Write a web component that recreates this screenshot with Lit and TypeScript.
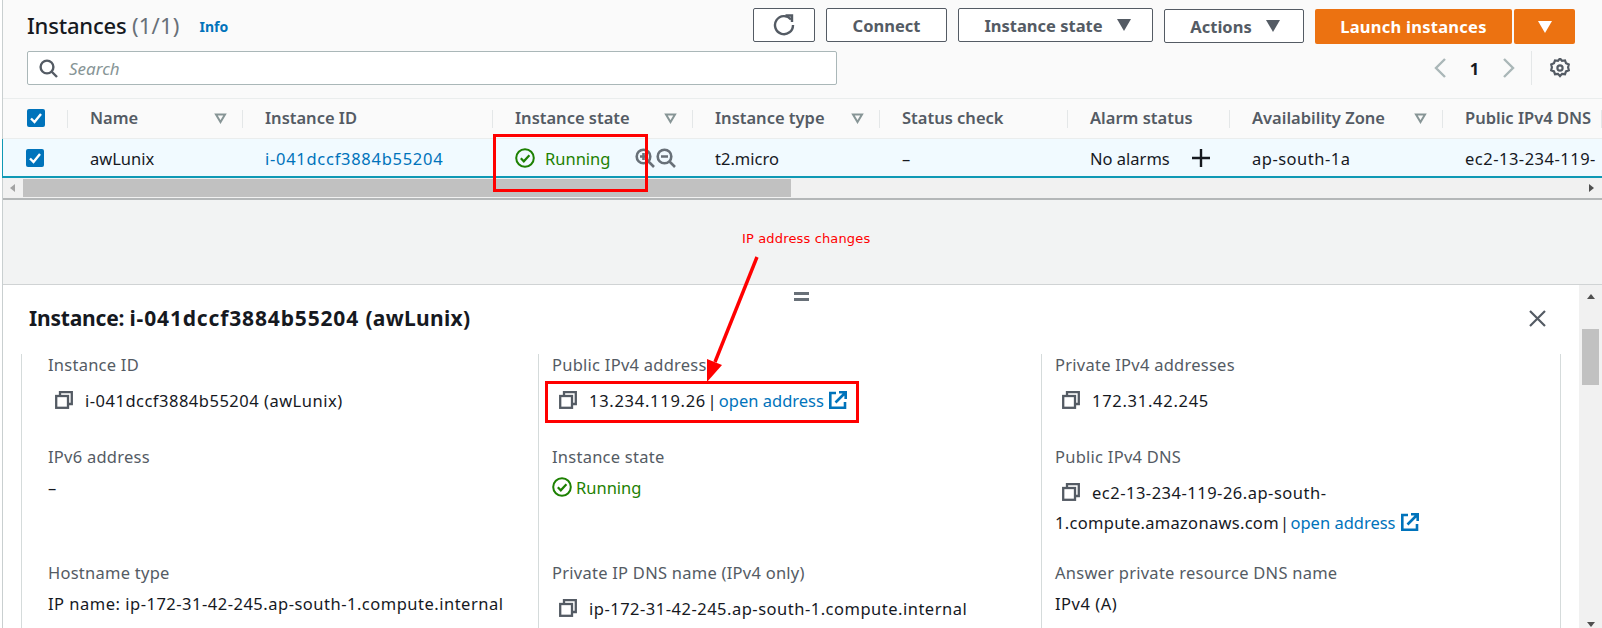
import { css, html, LitElement, svg } from "lit";
import { customElement } from "lit/decorators.js";

const columns = [
	{ label: "", filter: false },
	{ label: "Name", filter: true },
	{ label: "Instance ID", filter: false },
	{ label: "Instance state", filter: true },
	{ label: "Instance type", filter: true },
	{ label: "Status check", filter: false },
	{ label: "Alarm status", filter: false },
	{ label: "Availability Zone", filter: true },
	{ label: "Public IPv4 DNS", filter: false },
];

const checkbox = html`<svg class="check" viewBox="0 0 18 18">
	<rect width="18" height="18" rx="2" fill="#0073bb" />
	<path d="M4 9.5l3.5 3.5L14 5" fill="none" stroke="#fff" stroke-width="2.4" />
</svg>`;

const copyIcon = html`<svg class="copy" viewBox="0 0 18 18" fill="none" stroke="#545b64" stroke-width="2.3">
	<rect x="1.2" y="5" width="11.8" height="11.8" />
	<path d="M5 5V1.2h11.8V13H13" />
</svg>`;

const externalIcon = html`<svg class="ext" viewBox="0 0 18 18" fill="none" stroke="#0073bb" stroke-width="2.6">
	<path d="M7 2H1.3v14.7H16V11" />
	<path d="M6.5 11.5L16 2M10 1.3h6.7V8" />
</svg>`;

const runningIcon = (size: number) => html`<svg width=${size} height=${size} viewBox="0 0 20 20" fill="none" stroke="#1d8102" stroke-width="2">
	<circle cx="10" cy="10" r="8.8" />
	<path d="M5.8 10.3l3 3 5.6-6" stroke-width="2.2" />
</svg>`;

const caret = svg`<path d="M0 0h14L7 12z" />`;

const magnifier = (minusOnly: boolean) => html`<svg class="mag" viewBox="0 0 20 20" fill="none" stroke="#687078" stroke-width="2.6">
	<circle cx="8.5" cy="8.5" r="6.8" />
	<path d="M13.5 13.5L19 19M5 8.5h7" />
	${minusOnly ? "" : svg`<path d="M8.5 5v7" />`}
</svg>`;

@customElement("app-root")
export class AppRoot extends LitElement {
	static override styles = css`
		:host {
			display: block;
			position: relative;
			width: 1602px;
			height: 628px;
			overflow: hidden;
			background: #fff;
			font-family: "Noto Sans", "Liberation Sans", sans-serif;
			color: #16191f;
		}

		.page {
			display: flex;
			flex-direction: column;
			height: 628px;
			margin-left: 2px;
			border-left: 1px solid #c9cfd0;
			background: #f2f3f3;
		}

		.top {
			background: #fafafa;
			padding: 8px 27px 0 24px;
			height: 98px;
			box-sizing: border-box;
		}

		.bar {
			display: flex;
			align-items: flex-start;
			height: 43px;
		}

		.title {
			font-size: 22px;
			font-weight: 500;
			line-height: 34px;
			letter-spacing: -0.2px;
		}

		.title span {
			color: #687078;
			font-weight: 400;
			letter-spacing: 0.2px;
		}

		.info {
			margin-left: 20px;
			font-size: 14px;
			font-weight: 700;
			line-height: 38px;
			color: #0073bb;
		}

		.actions {
			margin-left: auto;
			display: flex;
			gap: 11px;
		}

		.btn {
			box-sizing: border-box;
			height: 34px;
			display: flex;
			align-items: center;
			justify-content: center;
			gap: 14px;
			border: 1px solid #545b64;
			border-radius: 2px;
			background: #fff;
			color: #545b64;
			font-size: 16.5px;
			font-weight: 700;
		}

		.btn svg.caret {
			width: 14px;
			height: 12px;
			fill: #545b64;
		}

		.w-refresh { width: 62px; }
		.w-connect { width: 121px; }
		.w-state { width: 195px; padding-left: 4px; }
		.w-actions { width: 140px; margin-top: 1px; padding-left: 2px; }

		.launch-group {
			display: flex;
			gap: 2px;
			margin-top: 1px;
		}

		.primary {
			border: none;
			height: 35px;
			background: #ec7211;
			color: #fff;
		}

		.w-launch { width: 197px; letter-spacing: 0.25px; }
		.w-drop { width: 61px; }
		.primary svg.caret { fill: #fff; }

		.tools {
			display: flex;
			align-items: center;
			height: 34px;
		}

		.search {
			box-sizing: border-box;
			width: 810px;
			height: 34px;
			display: flex;
			align-items: center;
			gap: 11px;
			padding-left: 11px;
			border: 1px solid #aab7b8;
			border-radius: 2px;
			background: #fff;
			color: #879596;
			font-size: 17px;
			font-style: italic;
		}

		.pager {
			margin-left: auto;
			padding-right: 5px;
			display: flex;
			align-items: center;
			height: 34px;
			font-size: 16.5px;
			font-weight: 700;
		}

		.pager .num {
			width: 55px;
			text-align: center;
		}

		.pager .sep {
			width: 1px;
			height: 34px;
			margin: 0 18px 0 15px;
			background: #e4e7e8;
		}

		.table {
			display: grid;
			grid-template-columns: 65px 175px 250px 200px 187px 188px 162px 213px 1fr;
			border-top: 1px solid #eaeded;
		}

		.head {
			position: relative;
			box-sizing: border-box;
			height: 40px;
			display: flex;
			align-items: center;
			padding-left: 22px;
			padding-bottom: 2px;
			background: #fafafa;
			border-bottom: 1px solid #eaeded;
			font-size: 16.5px;
			font-weight: 600;
			color: #545b64;
			white-space: nowrap;
			overflow: hidden;
		}

		.head::after {
			content: "";
			position: absolute;
			right: 0;
			top: 11px;
			height: 18px;
			width: 1px;
			background: #e4e7e8;
		}

		.head:last-child::after { display: none; }

		.head svg.filter {
			position: absolute;
			right: 16px;
			top: 14px;
			width: 13px;
			height: 11px;
		}

		.head.box,
		.cell.box {
			padding-left: 24px;
		}

		.check {
			width: 18px;
			height: 18px;
			flex: none;
		}

		.cell {
			box-sizing: border-box;
			height: 39px;
			display: flex;
			align-items: center;
			padding-left: 22px;
			padding-top: 1px;
			background: #f1faff;
			border-bottom: 2px solid #0f99b5;
			font-size: 16.5px;
			white-space: nowrap;
			overflow: hidden;
		}

		.cell.first {
			box-shadow: inset 1px 0 0 #0f99b5;
			margin-left: -1px;
		}

		.link {
			color: #0073bb;
		}

		.d { letter-spacing: 0.5px; }
		.dd { letter-spacing: 0.72px; }

		.state {
			color: #1d8102;
			gap: 10px;
		}

		.mag {
			width: 20px;
			height: 20px;
			flex: none;
		}

		.mags {
			display: flex;
			gap: 1px;
			margin-left: 15px;
		}

		.cell.state {
			gap: 10px;
		}

		.plus {
			margin-left: 22px;
			width: 18px;
			height: 18px;
			flex: none;
		}

		.hscroll {
			height: 20px;
			background: #f1f1f1;
			border-bottom: 2px solid #b4b7b8;
			display: flex;
			align-items: center;
		}

		.hscroll .thumb {
			width: 768px;
			height: 18px;
			margin-left: 8px;
			background: #c1c1c1;
		}

		.hscroll .left {
			width: 0;
			height: 0;
			margin-left: 7px;
			border: 4px solid transparent;
			border-right: 5px solid #a3a3a3;
			border-left: 0;
		}

		.hscroll .right {
			width: 0;
			height: 0;
			margin-left: auto;
			margin-right: 8px;
			border: 4px solid transparent;
			border-left: 5px solid #505050;
			border-right: 0;
		}

		.gap {
			height: 84px;
			border-bottom: 1px solid #d0d3d4;
			flex: none;
		}

		.panel {
			flex: 1;
			display: flex;
			background: #fff;
			min-height: 0;
		}

		.panel-main {
			flex: 1;
			position: relative;
		}

		.panel-title {
			display: flex;
			align-items: center;
			box-sizing: border-box;
			height: 69px;
			padding-left: 26px;
			padding-bottom: 3px;
			font-size: 21px;
			font-weight: 700;
			white-space: pre;
		}

		.panel-title .lead { letter-spacing: -0.2px; }
		.panel-title .id { letter-spacing: 0.85px; }
		.panel-title .name { letter-spacing: 0.3px; }

		.panel-title svg {
			margin-left: auto;
			margin-right: 33px;
			width: 17px;
			height: 17px;
		}

		.grip {
			position: absolute;
			left: 791px;
			top: 7px;
			width: 15px;
			height: 9px;
			border-top: 3px solid #687078;
			border-bottom: 3px solid #687078;
			box-sizing: border-box;
		}

		.details {
			display: grid;
			grid-template-columns: 517px 503px 518px;
			grid-template-rows: 92px 116px 1fr;
			margin-left: 18px;
			margin-right: 18px;
			height: 274px;
			border-right: 1px solid #d5dbdb;
		}

		.field {
			border-left: 1px solid #d5dbdb;
			padding-left: 13px;
			font-size: 16.5px;
			white-space: nowrap;
		}

		.field:nth-child(3n + 1) {
			padding-left: 26px;
		}

		.field label {
			display: block;
			height: 21px;
			line-height: 21px;
			letter-spacing: 0.25px;
			color: #545b64;
		}

		.val {
			display: flex;
			align-items: center;
			height: 22px;
			margin-top: 9px;
		}

		.val.copied {
			margin-top: 14px;
			padding-left: 7px;
		}

		.val.second-line {
			margin-top: 8px;
		}

		.val.state {
			gap: 4px;
		}

		.copy {
			width: 18px;
			height: 18px;
			flex: none;
			margin-right: 12px;
		}

		.ext {
			width: 18px;
			height: 18px;
			flex: none;
			margin-left: 5px;
		}

		.pipe {
			white-space: pre;
			word-spacing: -3.5px;
		}

		.pipe.tight {
			letter-spacing: 0.3px;
			word-spacing: -3.5px;
		}

		.vscroll {
			flex: none;
			width: 23px;
			background: #f1f1f1;
			display: flex;
			flex-direction: column;
			align-items: center;
		}

		.vscroll .up {
			width: 0;
			height: 0;
			margin-top: 9px;
			border: 4px solid transparent;
			border-bottom: 5px solid #505050;
			border-top: 0;
		}

		.vscroll .thumb {
			width: 17px;
			height: 56px;
			margin-top: 30px;
			background: #c1c1c1;
		}

		.vscroll .down {
			width: 0;
			height: 0;
			margin-top: auto;
			margin-bottom: 1px;
			border: 4px solid transparent;
			border-top: 5px solid #505050;
			border-bottom: 0;
		}

		.mark {
			position: absolute;
			box-sizing: border-box;
			border: 3px solid #f00;
			pointer-events: none;
		}

		.mark-state {
			left: 493px;
			top: 134px;
			width: 155px;
			height: 58px;
		}

		.mark-ip {
			left: 545px;
			top: 381px;
			width: 314px;
			height: 42px;
		}

		.note {
			position: absolute;
			left: 742px;
			top: 230px;
			font-family: "DejaVu Sans", sans-serif;
			font-size: 13px;
			line-height: 18px;
			letter-spacing: 0.15px;
			color: #f00;
		}

		.arrow {
			position: absolute;
			left: 690px;
			top: 250px;
			width: 80px;
			height: 140px;
		}
	`;

	override render() {
		return html`
			<div class="page">
				<div class="top">
					<div class="bar">
						<div class="title">Instances <span>(1/1)</span></div>
						<div class="info">Info</div>
						<div class="actions">
							<div class="btn w-refresh">
								<svg width="22" height="22" viewBox="0 0 22 22" fill="none" stroke="#545b64" stroke-width="2.4">
									<path d="M18 5.5A9 9 0 1 0 20 11" />
									<path d="M12.5 1.5H19V8" />
								</svg>
							</div>
							<div class="btn w-connect">Connect</div>
							<div class="btn w-state">
								Instance state
								<svg class="caret" viewBox="0 0 14 12">${caret}</svg>
							</div>
							<div class="btn w-actions">
								Actions
								<svg class="caret" viewBox="0 0 14 12">${caret}</svg>
							</div>
							<div class="launch-group">
								<div class="btn primary w-launch">Launch instances</div>
								<div class="btn primary w-drop">
									<svg class="caret" viewBox="0 0 14 12">${caret}</svg>
								</div>
							</div>
						</div>
					</div>
					<div class="tools">
						<div class="search">
							<svg width="19" height="19" viewBox="0 0 19 19" fill="none" stroke="#545b64" stroke-width="2.4">
								<circle cx="8" cy="8" r="6.4" />
								<path d="M12.5 12.5L18 18" />
							</svg>
							Search
						</div>
						<div class="pager">
							<svg width="14" height="22" viewBox="0 0 14 22" fill="none" stroke="#aab7b8" stroke-width="2.4"><path d="M12 2L3 11l9 9" /></svg>
							<span class="num">1</span>
							<svg width="14" height="22" viewBox="0 0 14 22" fill="none" stroke="#aab7b8" stroke-width="2.4"><path d="M2 2l9 9-9 9" /></svg>
							<span class="sep"></span>
							<svg width="20" height="20" viewBox="0 0 20 20" fill="none" stroke="#545b64" stroke-width="2.2">
								<path d="M10 1.2l2 2.3 3-.4 1 2.8 2.8 1.2-.7 2.9.7 2.9-2.8 1.2-1 2.8-3-.4-2 2.3-2-2.3-3 .4-1-2.8-2.8-1.2.7-2.9-.7-2.9 2.8-1.2 1-2.8 3 .4z" transform="translate(0 -.7)" />
								<circle cx="10" cy="10" r="2.6" />
							</svg>
						</div>
					</div>
				</div>

				<div class="table">
					${columns.map(
						(c, i) => html`<div class="head ${i === 0 ? "box" : ""}">
							${i === 0 ? checkbox : c.label}
							${c.filter
								? html`<svg class="filter" viewBox="0 0 13 11" fill="none" stroke="#879596" stroke-width="2"><path d="M2 1.5h9L6.5 9z" /></svg>`
								: ""}
						</div>`,
					)}
					<div class="cell box first">${checkbox}</div>
					<div class="cell">awLunix</div>
					<div class="cell"><span class="link dd">i-041dccf3884b55204</span></div>
					<div class="cell state">
						${runningIcon(20)}<span>Running</span>
						<span class="mags">${magnifier(false)}${magnifier(true)}</span>
					</div>
					<div class="cell">t2.micro</div>
					<div class="cell">–</div>
					<div class="cell">
						No alarms
						<svg class="plus" viewBox="0 0 18 18" stroke="#16191f" stroke-width="2.4"><path d="M9 0v18M0 9h18" /></svg>
					</div>
					<div class="cell d">ap-south-1a</div>
					<div class="cell d">ec2-13-234-119-</div>
				</div>

				<div class="hscroll">
					<span class="left"></span>
					<span class="thumb"></span>
					<span class="right"></span>
				</div>

				<div class="gap"></div>

				<div class="panel">
					<div class="panel-main">
						<span class="grip"></span>
						<div class="panel-title">
							<span class="lead">Instance: </span><span class="id">i-041dccf3884b55204 </span><span class="name">(awLunix)</span>
							<svg viewBox="0 0 17 17" stroke="#545b64" stroke-width="2.2"><path d="M1 1l15 15M16 1L1 16" /></svg>
						</div>
						<div class="details">
							<div class="field">
								<label>Instance ID</label>
								<div class="val copied">${copyIcon}<span class="d">i-041dccf3884b55204 (awLunix)</span></div>
							</div>
							<div class="field">
								<label>Public IPv4 address</label>
								<div class="val copied">
									${copyIcon}<span class="pipe dd">13.234.119.26 | </span><span class="link">open address</span>${externalIcon}
								</div>
							</div>
							<div class="field">
								<label>Private IPv4 addresses</label>
								<div class="val copied">${copyIcon}<span class="dd">172.31.42.245</span></div>
							</div>
							<div class="field">
								<label>IPv6 address</label>
								<div class="val">–</div>
							</div>
							<div class="field">
								<label>Instance state</label>
								<div class="val state">${runningIcon(20)}<span>Running</span></div>
							</div>
							<div class="field">
								<label>Public IPv4 DNS</label>
								<div class="val copied">${copyIcon}<span class="d">ec2-13-234-119-26.ap-south-</span></div>
								<div class="val second-line">
									<span class="pipe tight">1.compute.amazonaws.com | </span><span class="link">open address</span>${externalIcon}
								</div>
							</div>
							<div class="field">
								<label>Hostname type</label>
								<div class="val d">IP name: ip-172-31-42-245.ap-south-1.compute.internal</div>
							</div>
							<div class="field">
								<label>Private IP DNS name (IPv4 only)</label>
								<div class="val copied">${copyIcon}<span class="d">ip-172-31-42-245.ap-south-1.compute.internal</span></div>
							</div>
							<div class="field">
								<label>Answer private resource DNS name</label>
								<div class="val d">IPv4 (A)</div>
							</div>
						</div>
					</div>
					<div class="vscroll">
						<span class="up"></span>
						<span class="thumb"></span>
						<span class="down"></span>
					</div>
				</div>
			</div>

			<div class="mark mark-state"></div>
			<div class="mark mark-ip"></div>
			<div class="note">IP address changes</div>
			<svg class="arrow" viewBox="0 0 80 140">
				<path d="M67 7L25 112" stroke="#f00" stroke-width="3.4" fill="none" />
				<path d="M17 132L17 109 32 115z" fill="#f00" />
			</svg>
		`;
	}
}

declare global {
	interface HTMLElementTagNameMap {
		"app-root": AppRoot;
	}
}
